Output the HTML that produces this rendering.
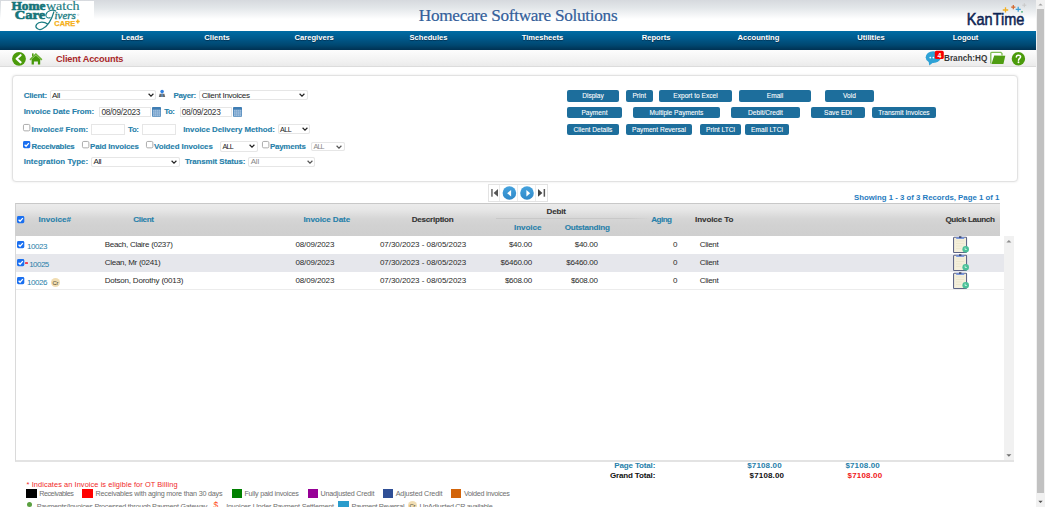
<!DOCTYPE html>
<html><head><meta charset="utf-8"><title>Client Accounts</title>
<style>
html,body{margin:0;padding:0;}
body{width:1045px;height:507px;overflow:hidden;position:relative;background:#fff;font-family:"Liberation Sans",sans-serif;}
.t{position:absolute;white-space:nowrap;line-height:1;}
.r{position:absolute;}
svg.r{overflow:visible;}
</style></head><body>
<div class="r" style="left:0px;top:0px;width:1036px;height:31px;background:linear-gradient(#d6d9de 0px,#e3e7ea 8px,#f7f8f9 16px,#fff 19px,#fff 31px);"></div>
<div class="r" style="left:1px;top:1px;width:93px;height:28px;background:#fff;"></div>
<svg class="r" style="left:0;top:0" width="100" height="31" viewBox="0 0 100 31">
<text x="11.5" y="9.7" font-family="Liberation Serif" font-weight="700" font-size="12" fill="#167479" textLength="34" lengthAdjust="spacingAndGlyphs" stroke="#167479" stroke-width="0.6">Home</text>
<text x="46" y="9.7" font-family="Liberation Serif" font-size="12" fill="#1b7d83" textLength="33.4" lengthAdjust="spacingAndGlyphs" stroke="#1b7d83" stroke-width="0.15">watch</text>
<text x="14.8" y="18.7" font-family="Liberation Serif" font-weight="700" font-size="12" fill="#167479" textLength="30.5" lengthAdjust="spacingAndGlyphs" stroke="#167479" stroke-width="0.6">Care</text>
<text x="54.5" y="18.5" font-family="Liberation Serif" font-style="italic" font-size="9.5" fill="#1b7d83" textLength="21.3" lengthAdjust="spacingAndGlyphs" stroke="#1b7d83" stroke-width="0.3">ivers</text>
<circle cx="78.2" cy="14.8" r="0.8" fill="none" stroke="#8ab" stroke-width="0.3"/>
<path d="M56.2 11.3 C53 9 47.2 10.4 46 14.5 C45.4 17 47.5 18.8 50.5 17.5" stroke="#1b7d83" stroke-width="1.1" fill="none"/>
<path d="M54 11.5 C52 18.5 48 26 42.5 28.8 C38.5 31 34.3 27.5 36.6 24.3 C38.8 21.3 44.5 21.5 47.6 24" stroke="#1b7d83" stroke-width="1.2" fill="none"/>
<text x="54.3" y="25.9" font-family="Liberation Sans" font-weight="700" font-size="7.6" fill="#f5b01a" textLength="21" lengthAdjust="spacingAndGlyphs" stroke="#f5b01a" stroke-width="0.25">CARE</text>
<path d="M77.8 19.6 V23.4 M75.9 21.5 H79.7" stroke="#f5b01a" stroke-width="1.4"/>
</svg>
<div class="t" style="left:418.80px;top:7px;font-size:17.2px;color:#345f9b;font-weight:400;font-family:'Liberation Serif', serif;letter-spacing:-0.285px;-webkit-text-stroke:0.22px #345f9b;">Homecare Software Solutions</div>
<svg class="r" style="left:950px;top:0" width="86" height="31" viewBox="950 0 86 31">
<text x="966.8" y="24.9" font-family="Liberation Sans" font-size="17" fill="#0f2553" stroke="#0f2553" stroke-width="0.55" textLength="57.6" lengthAdjust="spacingAndGlyphs">KanTime</text>
<path d="M1005.5 7.3v5.3M1002.8 10h5.4" stroke="#f3b020" stroke-width="1.3"/>
<path d="M1013.3 5v4.2M1011.2 7.1h4.2" stroke="#d2652a" stroke-width="1.2"/>
<path d="M1018.2 6.8v5M1015.7 9.3h5" stroke="#3a9ed8" stroke-width="1.2"/>
<path d="M1024.3 3.2v4M1022.3 5.2h4" stroke="#c8c8c8" stroke-width="1"/>
<circle cx="1022" cy="11.8" r="0.9" fill="#40b070"/>
</svg>
<div class="r" style="left:0px;top:31px;width:1036px;height:19px;background:linear-gradient(#006ca5,#00598b 40%,#004770 75%,#003253);"></div>
<div class="t" style="left:121.32px;top:34px;font-size:7.6px;color:#fff;font-weight:700;font-family:'Liberation Sans', sans-serif;text-shadow:0 0.8px 0.8px rgba(0,20,40,0.55);">Leads</div>
<div class="t" style="left:204.33px;top:34px;font-size:7.6px;color:#fff;font-weight:700;font-family:'Liberation Sans', sans-serif;text-shadow:0 0.8px 0.8px rgba(0,20,40,0.55);">Clients</div>
<div class="t" style="left:294.55px;top:34px;font-size:7.6px;color:#fff;font-weight:700;font-family:'Liberation Sans', sans-serif;text-shadow:0 0.8px 0.8px rgba(0,20,40,0.55);">Caregivers</div>
<div class="t" style="left:409.50px;top:34px;font-size:7.6px;color:#fff;font-weight:700;font-family:'Liberation Sans', sans-serif;text-shadow:0 0.8px 0.8px rgba(0,20,40,0.55);">Schedules</div>
<div class="t" style="left:521.66px;top:34px;font-size:7.6px;color:#fff;font-weight:700;font-family:'Liberation Sans', sans-serif;text-shadow:0 0.8px 0.8px rgba(0,20,40,0.55);">Timesheets</div>
<div class="t" style="left:641.74px;top:34px;font-size:7.6px;color:#fff;font-weight:700;font-family:'Liberation Sans', sans-serif;text-shadow:0 0.8px 0.8px rgba(0,20,40,0.55);">Reports</div>
<div class="t" style="left:737.60px;top:34px;font-size:7.6px;color:#fff;font-weight:700;font-family:'Liberation Sans', sans-serif;text-shadow:0 0.8px 0.8px rgba(0,20,40,0.55);">Accounting</div>
<div class="t" style="left:857.28px;top:34px;font-size:7.6px;color:#fff;font-weight:700;font-family:'Liberation Sans', sans-serif;text-shadow:0 0.8px 0.8px rgba(0,20,40,0.55);">Utilities</div>
<div class="t" style="left:952.64px;top:34px;font-size:7.6px;color:#fff;font-weight:700;font-family:'Liberation Sans', sans-serif;text-shadow:0 0.8px 0.8px rgba(0,20,40,0.55);">Logout</div>
<div class="r" style="left:0px;top:50px;width:1036px;height:17px;background:linear-gradient(#fdfdfd,#f3f3f3 60%,#ebebeb);border-bottom:1px solid #dcdcdc;box-sizing:border-box;"></div>
<svg class="r" style="left:0;top:48px" width="60" height="20" viewBox="0 48 60 20">
<circle cx="19" cy="58.8" r="6.9" fill="#4b9b0b"/>
<path d="M20.6 55.2 L16.6 58.8 L20.6 62.4" stroke="#fff" stroke-width="2.1" fill="none" stroke-linecap="round" stroke-linejoin="round"/>
<rect x="32" y="53.4" width="1.6" height="3" fill="#4e9d12"/>
<path d="M31.6 59.2 L35.9 55.6 L40.2 59.2 V64.6 H37.9 V61.6 H33.9 V64.6 H31.6 Z" fill="#46990a"/>
<path d="M29.4 59.2 L35.9 53 L42.4 59.2 L41.2 60.4 L35.9 55.3 L30.6 60.4 Z" fill="#6ab232"/>
</svg>
<div class="t" style="left:56.10px;top:55px;font-size:9.2px;color:#a8282a;font-weight:700;font-family:'Liberation Sans', sans-serif;letter-spacing:-0.164px;">Client Accounts</div>
<svg class="r" style="left:920px;top:48px" width="110" height="20" viewBox="920 48 110 20">
<ellipse cx="933.2" cy="57.2" rx="7.5" ry="5.9" fill="#2ea2d6"/>
<path d="M928.5 61 L929.3 65.6 L933.5 62.2 Z" fill="#2ea2d6"/>
<circle cx="930.3" cy="57.6" r="0.9" fill="#fff"/><circle cx="933.4" cy="57.6" r="0.9" fill="#fff"/>
<rect x="934.8" y="50.8" width="9" height="8.3" rx="1.6" fill="#f80000"/>
<text x="939.3" y="57.6" font-family="Liberation Sans" font-weight="700" font-size="6.8" fill="#fff" text-anchor="middle">4</text>
<path d="M990.8 63.5 V53.3 Q990.8 52.4 991.7 52.4 H1000.8 L1002 53.6 V55.5" stroke="#7fbe52" stroke-width="1.3" fill="#fff"/>
<path d="M994.2 55.4 L1005.3 55.8 L1003.4 63.9 L991.5 63.9 Z" fill="#4f9d12"/>
<circle cx="1018.4" cy="58.7" r="6.7" fill="#4b9b0b"/>
<path d="M1016.3 56.9 C1016.3 54.6 1020.6 54.6 1020.6 56.8 C1020.6 58.3 1018.5 58.5 1018.5 60.3" stroke="#fff" stroke-width="1.5" fill="none" stroke-linecap="round"/><circle cx="1018.5" cy="62.2" r="0.95" fill="#fff"/>
</svg>
<div class="t" style="left:944.00px;top:55px;font-size:8.2px;color:#383838;font-weight:700;font-family:'Liberation Sans', sans-serif;letter-spacing:0.013px;">Branch:HQ</div>
<div class="r" style="left:12px;top:75px;width:1006px;height:107px;border:1px solid #e2e2e2;border-radius:4px;box-sizing:border-box;background:#fff;box-shadow:0 0 2.5px rgba(0,0,0,0.10);"></div>
<div class="t" style="left:23.70px;top:92px;font-size:7.9px;color:#2680aa;font-weight:700;font-family:'Liberation Sans', sans-serif;letter-spacing:-0.178px;-webkit-text-stroke:0.12px #2680aa;">Client:</div>
<div class="t" style="left:173.40px;top:92px;font-size:7.9px;color:#2680aa;font-weight:700;font-family:'Liberation Sans', sans-serif;letter-spacing:-0.255px;-webkit-text-stroke:0.12px #2680aa;">Payer:</div>
<div class="t" style="left:23.70px;top:108px;font-size:7.9px;color:#2680aa;font-weight:700;font-family:'Liberation Sans', sans-serif;letter-spacing:-0.029px;-webkit-text-stroke:0.12px #2680aa;">Invoice Date From:</div>
<div class="t" style="left:164.30px;top:108px;font-size:7.9px;color:#2680aa;font-weight:700;font-family:'Liberation Sans', sans-serif;letter-spacing:-0.546px;-webkit-text-stroke:0.12px #2680aa;">To:</div>
<div class="t" style="left:31.50px;top:126px;font-size:7.9px;color:#2680aa;font-weight:700;font-family:'Liberation Sans', sans-serif;letter-spacing:0.038px;-webkit-text-stroke:0.12px #2680aa;">Invoice# From:</div>
<div class="t" style="left:128.00px;top:126px;font-size:7.9px;color:#2680aa;font-weight:700;font-family:'Liberation Sans', sans-serif;letter-spacing:-0.346px;-webkit-text-stroke:0.12px #2680aa;">To:</div>
<div class="t" style="left:183.20px;top:126px;font-size:7.9px;color:#2680aa;font-weight:700;font-family:'Liberation Sans', sans-serif;letter-spacing:-0.059px;-webkit-text-stroke:0.12px #2680aa;">Invoice Delivery Method:</div>
<div class="t" style="left:31.50px;top:143px;font-size:7.9px;color:#2680aa;font-weight:700;font-family:'Liberation Sans', sans-serif;letter-spacing:-0.246px;-webkit-text-stroke:0.12px #2680aa;">Receivables</div>
<div class="t" style="left:90.00px;top:143px;font-size:7.9px;color:#2680aa;font-weight:700;font-family:'Liberation Sans', sans-serif;letter-spacing:-0.123px;-webkit-text-stroke:0.12px #2680aa;">Paid Invoices</div>
<div class="t" style="left:154.00px;top:143px;font-size:7.9px;color:#2680aa;font-weight:700;font-family:'Liberation Sans', sans-serif;letter-spacing:-0.048px;-webkit-text-stroke:0.12px #2680aa;">Voided Invoices</div>
<div class="t" style="left:269.90px;top:143px;font-size:7.9px;color:#2680aa;font-weight:700;font-family:'Liberation Sans', sans-serif;letter-spacing:-0.190px;-webkit-text-stroke:0.12px #2680aa;">Payments</div>
<div class="t" style="left:23.70px;top:158px;font-size:7.9px;color:#2680aa;font-weight:700;font-family:'Liberation Sans', sans-serif;letter-spacing:0.064px;-webkit-text-stroke:0.12px #2680aa;">Integration Type:</div>
<div class="t" style="left:185.00px;top:158px;font-size:7.9px;color:#2680aa;font-weight:700;font-family:'Liberation Sans', sans-serif;letter-spacing:-0.093px;-webkit-text-stroke:0.12px #2680aa;">Transmit Status:</div>
<div class="r" style="left:49.5px;top:90px;width:106.5px;height:10.299999999999997px;border:1px solid #e6e6e6;border-radius:2px;box-sizing:border-box;background:#fff;box-shadow:0 0 0.6px rgba(0,0,0,0.07);"></div>
<div class="t" style="left:51.90px;top:92px;font-size:8.1px;color:#222;font-weight:400;font-family:'Liberation Sans', sans-serif;letter-spacing:-0.345px;">All</div>
<svg class="r" style="left:147.5px;top:93.15px" width="6" height="4" viewBox="0 0 6 4"><path d="M0.6 0.8 L3 3.1 L5.4 0.8" stroke="#222" stroke-width="1.2" fill="none"/></svg>
<svg class="r" style="left:158px;top:89px" width="8" height="9" viewBox="158 89 8 9">
<path d="M158.8 97 L159.6 93.8 H164.4 L165.2 97 Z" fill="#6b6b6b"/>
<rect x="161.5" y="93.8" width="1.1" height="3.2" fill="#5a9ee0"/>
<circle cx="162.1" cy="91.6" r="1.8" fill="#2f7fe0"/>
</svg>
<div class="r" style="left:199.4px;top:90px;width:108.29999999999998px;height:10.299999999999997px;border:1px solid #e6e6e6;border-radius:2px;box-sizing:border-box;background:#fff;box-shadow:0 0 0.6px rgba(0,0,0,0.07);"></div>
<div class="t" style="left:201.80px;top:92px;font-size:8.1px;color:#222;font-weight:400;font-family:'Liberation Sans', sans-serif;letter-spacing:-0.321px;">Client Invoices</div>
<svg class="r" style="left:299.2px;top:93.15px" width="6" height="4" viewBox="0 0 6 4"><path d="M0.6 0.8 L3 3.1 L5.4 0.8" stroke="#222" stroke-width="1.2" fill="none"/></svg>
<div class="r" style="left:99.2px;top:106.7px;width:51.8px;height:10.700000000000003px;border:1px solid #e6e6e6;box-sizing:border-box;background:#fff;box-shadow:0 0 0.6px rgba(0,0,0,0.07);"></div>
<div class="t" style="left:101.40px;top:108px;font-size:8.3px;color:#333;font-weight:400;font-family:'Liberation Sans', sans-serif;letter-spacing:-0.271px;">08/09/2023</div>
<svg class="r" style="left:152px;top:107px" width="9" height="10" viewBox="0 0 9 10">
<rect x="0" y="0" width="9" height="9.7" rx="0.8" fill="#3f7db3"/>
<rect x="0.6" y="2.5" width="7.8" height="6.7" fill="#6f9cc8"/>
<rect x="0.90" y="2.90" width="1.55" height="1.8" fill="#9dbedd"/><rect x="0.90" y="5.10" width="1.55" height="1.8" fill="#9dbedd"/><rect x="0.90" y="7.30" width="1.55" height="1.8" fill="#9dbedd"/><rect x="2.85" y="2.90" width="1.55" height="1.8" fill="#9dbedd"/><rect x="2.85" y="5.10" width="1.55" height="1.8" fill="#9dbedd"/><rect x="2.85" y="7.30" width="1.55" height="1.8" fill="#9dbedd"/><rect x="4.80" y="2.90" width="1.55" height="1.8" fill="#9dbedd"/><rect x="4.80" y="5.10" width="1.55" height="1.8" fill="#9dbedd"/><rect x="4.80" y="7.30" width="1.55" height="1.8" fill="#9dbedd"/><rect x="6.75" y="2.90" width="1.55" height="1.8" fill="#9dbedd"/><rect x="6.75" y="5.10" width="1.55" height="1.8" fill="#9dbedd"/><rect x="6.75" y="7.30" width="1.55" height="1.8" fill="#9dbedd"/>
</svg>
<div class="r" style="left:179.5px;top:106.5px;width:52.099999999999994px;height:10.900000000000006px;border:1px solid #e6e6e6;box-sizing:border-box;background:#fff;box-shadow:0 0 0.6px rgba(0,0,0,0.07);"></div>
<div class="t" style="left:181.70px;top:108px;font-size:8.3px;color:#333;font-weight:400;font-family:'Liberation Sans', sans-serif;letter-spacing:-0.271px;">08/09/2023</div>
<svg class="r" style="left:233px;top:107px" width="9" height="10" viewBox="0 0 9 10">
<rect x="0" y="0" width="9" height="9.7" rx="0.8" fill="#3f7db3"/>
<rect x="0.6" y="2.5" width="7.8" height="6.7" fill="#6f9cc8"/>
<rect x="0.90" y="2.90" width="1.55" height="1.8" fill="#9dbedd"/><rect x="0.90" y="5.10" width="1.55" height="1.8" fill="#9dbedd"/><rect x="0.90" y="7.30" width="1.55" height="1.8" fill="#9dbedd"/><rect x="2.85" y="2.90" width="1.55" height="1.8" fill="#9dbedd"/><rect x="2.85" y="5.10" width="1.55" height="1.8" fill="#9dbedd"/><rect x="2.85" y="7.30" width="1.55" height="1.8" fill="#9dbedd"/><rect x="4.80" y="2.90" width="1.55" height="1.8" fill="#9dbedd"/><rect x="4.80" y="5.10" width="1.55" height="1.8" fill="#9dbedd"/><rect x="4.80" y="7.30" width="1.55" height="1.8" fill="#9dbedd"/><rect x="6.75" y="2.90" width="1.55" height="1.8" fill="#9dbedd"/><rect x="6.75" y="5.10" width="1.55" height="1.8" fill="#9dbedd"/><rect x="6.75" y="7.30" width="1.55" height="1.8" fill="#9dbedd"/>
</svg>
<svg class="r" style="left:23.4px;top:124.3px" width="7.3" height="7.3" viewBox="0 0 10 10">
<rect x="0.6" y="0.6" width="8.8" height="8.8" rx="1.8" fill="#fff" stroke="#9c9c9c" stroke-width="1.15"/></svg>
<div class="r" style="left:91.1px;top:123.7px;width:33.7px;height:10.899999999999991px;border:1px solid #e6e6e6;box-sizing:border-box;background:#fff;box-shadow:0 0 0.6px rgba(0,0,0,0.07);"></div>
<div class="r" style="left:141.5px;top:123.7px;width:34.5px;height:10.899999999999991px;border:1px solid #e6e6e6;box-sizing:border-box;background:#fff;box-shadow:0 0 0.6px rgba(0,0,0,0.07);"></div>
<div class="r" style="left:277.5px;top:124.2px;width:32.5px;height:10.299999999999997px;border:1px solid #e6e6e6;border-radius:2px;box-sizing:border-box;background:#fff;box-shadow:0 0 0.6px rgba(0,0,0,0.07);"></div>
<div class="t" style="left:279.90px;top:126px;font-size:7.2px;color:#222;font-weight:400;font-family:'Liberation Sans', sans-serif;letter-spacing:-0.508px;">ALL</div>
<svg class="r" style="left:301.5px;top:127.35px" width="6" height="4" viewBox="0 0 6 4"><path d="M0.6 0.8 L3 3.1 L5.4 0.8" stroke="#222" stroke-width="1.2" fill="none"/></svg>
<svg class="r" style="left:23.4px;top:141.3px" width="7.3" height="7.3" viewBox="0 0 10 10">
<rect x="0" y="0" width="10" height="10" rx="2" fill="#1a6ff0"/>
<path d="M2.2 5.2 L4.2 7.2 L8 2.8" stroke="#fff" stroke-width="1.7" fill="none"/></svg>
<svg class="r" style="left:81.8px;top:141.3px" width="7.3" height="7.3" viewBox="0 0 10 10">
<rect x="0.6" y="0.6" width="8.8" height="8.8" rx="1.8" fill="#fff" stroke="#9c9c9c" stroke-width="1.15"/></svg>
<svg class="r" style="left:146.4px;top:141.3px" width="7.3" height="7.3" viewBox="0 0 10 10">
<rect x="0.6" y="0.6" width="8.8" height="8.8" rx="1.8" fill="#fff" stroke="#9c9c9c" stroke-width="1.15"/></svg>
<div class="r" style="left:220px;top:141.3px;width:37.60000000000002px;height:10.299999999999983px;border:1px solid #e6e6e6;border-radius:2px;box-sizing:border-box;background:#fff;box-shadow:0 0 0.6px rgba(0,0,0,0.07);"></div>
<div class="t" style="left:222.40px;top:143px;font-size:7.2px;color:#222;font-weight:400;font-family:'Liberation Sans', sans-serif;letter-spacing:-0.758px;">ALL</div>
<svg class="r" style="left:249.10000000000002px;top:144.45px" width="6" height="4" viewBox="0 0 6 4"><path d="M0.6 0.8 L3 3.1 L5.4 0.8" stroke="#222" stroke-width="1.2" fill="none"/></svg>
<svg class="r" style="left:262px;top:141.3px" width="7.3" height="7.3" viewBox="0 0 10 10">
<rect x="0.6" y="0.6" width="8.8" height="8.8" rx="1.8" fill="#fff" stroke="#9c9c9c" stroke-width="1.15"/></svg>
<div class="r" style="left:311px;top:141.7px;width:33.60000000000002px;height:9.700000000000017px;border:1px solid #e6e6e6;border-radius:2px;box-sizing:border-box;background:#fff;box-shadow:0 0 0.6px rgba(0,0,0,0.07);"></div>
<div class="t" style="left:313.40px;top:143px;font-size:7.2px;color:#888;font-weight:400;font-family:'Liberation Sans', sans-serif;letter-spacing:-0.808px;">ALL</div>
<svg class="r" style="left:336.1px;top:144.55px" width="6" height="4" viewBox="0 0 6 4"><path d="M0.6 0.8 L3 3.1 L5.4 0.8" stroke="#555" stroke-width="1.2" fill="none"/></svg>
<div class="r" style="left:91.1px;top:157.2px;width:88.80000000000001px;height:9.400000000000006px;border:1px solid #e6e6e6;border-radius:2px;box-sizing:border-box;background:#fff;box-shadow:0 0 0.6px rgba(0,0,0,0.07);"></div>
<div class="t" style="left:93.50px;top:158px;font-size:8.1px;color:#222;font-weight:400;font-family:'Liberation Sans', sans-serif;letter-spacing:-0.495px;">All</div>
<svg class="r" style="left:171.4px;top:159.89999999999998px" width="6" height="4" viewBox="0 0 6 4"><path d="M0.6 0.8 L3 3.1 L5.4 0.8" stroke="#222" stroke-width="1.2" fill="none"/></svg>
<div class="r" style="left:248.3px;top:157px;width:66.69999999999999px;height:9.900000000000006px;border:1px solid #e6e6e6;border-radius:2px;box-sizing:border-box;background:#fff;box-shadow:0 0 0.6px rgba(0,0,0,0.07);"></div>
<div class="t" style="left:250.70px;top:158px;font-size:8.1px;color:#888;font-weight:400;font-family:'Liberation Sans', sans-serif;letter-spacing:-0.246px;">All</div>
<svg class="r" style="left:306.5px;top:159.95px" width="6" height="4" viewBox="0 0 6 4"><path d="M0.6 0.8 L3 3.1 L5.4 0.8" stroke="#555" stroke-width="1.2" fill="none"/></svg>
<div class="r" style="left:567px;top:90.3px;width:52px;height:11.299999999999997px;background:#1d6e9c;border-radius:2px;"></div>
<div class="t" style="left:582.18px;top:93px;font-size:6.6px;color:#fff;font-weight:400;font-family:'Liberation Sans', sans-serif;-webkit-text-stroke:0.08px #fff;">Display</div>
<div class="r" style="left:626px;top:90.3px;width:26.5px;height:11.299999999999997px;background:#1d6e9c;border-radius:2px;"></div>
<div class="t" style="left:632.47px;top:93px;font-size:6.6px;color:#fff;font-weight:400;font-family:'Liberation Sans', sans-serif;-webkit-text-stroke:0.08px #fff;">Print</div>
<div class="r" style="left:659px;top:90.3px;width:73px;height:11.299999999999997px;background:#1d6e9c;border-radius:2px;"></div>
<div class="t" style="left:673.31px;top:93px;font-size:6.6px;color:#fff;font-weight:400;font-family:'Liberation Sans', sans-serif;-webkit-text-stroke:0.08px #fff;">Export to Excel</div>
<div class="r" style="left:739px;top:90.3px;width:72px;height:11.299999999999997px;background:#1d6e9c;border-radius:2px;"></div>
<div class="t" style="left:766.75px;top:93px;font-size:6.6px;color:#fff;font-weight:400;font-family:'Liberation Sans', sans-serif;-webkit-text-stroke:0.08px #fff;">Email</div>
<div class="r" style="left:825px;top:90.3px;width:49px;height:11.299999999999997px;background:#1d6e9c;border-radius:2px;"></div>
<div class="t" style="left:843.08px;top:93px;font-size:6.6px;color:#fff;font-weight:400;font-family:'Liberation Sans', sans-serif;-webkit-text-stroke:0.08px #fff;">Void</div>
<div class="r" style="left:567px;top:107.2px;width:55px;height:10.700000000000003px;background:#1d6e9c;border-radius:2px;"></div>
<div class="t" style="left:581.48px;top:110px;font-size:6.6px;color:#fff;font-weight:400;font-family:'Liberation Sans', sans-serif;-webkit-text-stroke:0.08px #fff;">Payment</div>
<div class="r" style="left:633px;top:107.2px;width:87px;height:10.700000000000003px;background:#1d6e9c;border-radius:2px;"></div>
<div class="t" style="left:649.54px;top:110px;font-size:6.6px;color:#fff;font-weight:400;font-family:'Liberation Sans', sans-serif;-webkit-text-stroke:0.08px #fff;">Multiple Payments</div>
<div class="r" style="left:731px;top:107.2px;width:69px;height:10.700000000000003px;background:#1d6e9c;border-radius:2px;"></div>
<div class="t" style="left:748.08px;top:110px;font-size:6.6px;color:#fff;font-weight:400;font-family:'Liberation Sans', sans-serif;-webkit-text-stroke:0.08px #fff;">Debit/Credit</div>
<div class="r" style="left:811px;top:107.2px;width:54px;height:10.700000000000003px;background:#1d6e9c;border-radius:2px;"></div>
<div class="t" style="left:824.06px;top:110px;font-size:6.6px;color:#fff;font-weight:400;font-family:'Liberation Sans', sans-serif;-webkit-text-stroke:0.08px #fff;">Save EDI</div>
<div class="r" style="left:872px;top:107.2px;width:64px;height:10.700000000000003px;background:#1d6e9c;border-radius:2px;"></div>
<div class="t" style="left:878.26px;top:110px;font-size:6.6px;color:#fff;font-weight:400;font-family:'Liberation Sans', sans-serif;-webkit-text-stroke:0.08px #fff;">Transmit Invoices</div>
<div class="r" style="left:567px;top:124.2px;width:52px;height:10.799999999999997px;background:#1d6e9c;border-radius:2px;"></div>
<div class="t" style="left:573.56px;top:127px;font-size:6.6px;color:#fff;font-weight:400;font-family:'Liberation Sans', sans-serif;-webkit-text-stroke:0.08px #fff;">Client Details</div>
<div class="r" style="left:626px;top:124.2px;width:66px;height:10.799999999999997px;background:#1d6e9c;border-radius:2px;"></div>
<div class="t" style="left:632.04px;top:127px;font-size:6.6px;color:#fff;font-weight:400;font-family:'Liberation Sans', sans-serif;-webkit-text-stroke:0.08px #fff;">Payment Reversal</div>
<div class="r" style="left:700px;top:124.2px;width:41px;height:10.799999999999997px;background:#1d6e9c;border-radius:2px;"></div>
<div class="t" style="left:706.08px;top:127px;font-size:6.6px;color:#fff;font-weight:400;font-family:'Liberation Sans', sans-serif;-webkit-text-stroke:0.08px #fff;">Print LTCi</div>
<div class="r" style="left:745px;top:124.2px;width:44px;height:10.799999999999997px;background:#1d6e9c;border-radius:2px;"></div>
<div class="t" style="left:751.11px;top:127px;font-size:6.6px;color:#fff;font-weight:400;font-family:'Liberation Sans', sans-serif;-webkit-text-stroke:0.08px #fff;">Email LTCi</div>
<div class="r" style="left:488px;top:184px;width:60px;height:18px;border:1px solid #e3e3e3;box-sizing:border-box;background:#fff;"></div>
<div class="r" style="left:499px;top:185px;width:1px;height:16px;background:#ececec;"></div>
<div class="r" style="left:517px;top:185px;width:1px;height:16px;background:#ececec;"></div>
<div class="r" style="left:535px;top:185px;width:1px;height:16px;background:#ececec;"></div>
<svg class="r" style="left:488px;top:184px" width="60" height="18" viewBox="488 184 60 18">
<rect x="491.2" y="189" width="1.5" height="7.7" fill="#666"/>
<path d="M498 189 L493.6 192.9 L498 196.8 Z" fill="#555"/>
<defs><linearGradient id="pg" x1="0" y1="0" x2="0" y2="1"><stop offset="0" stop-color="#45a3de"/><stop offset="1" stop-color="#2f88c8"/></linearGradient></defs>
<circle cx="509.4" cy="193" r="6.8" fill="url(#pg)"/>
<path d="M511.1 190 L507.1 193.2 L511.1 196.4 Z" fill="#fff"/>
<circle cx="527" cy="193" r="6.8" fill="url(#pg)"/>
<path d="M526.4 190 L530.2 193.2 L526.4 196.4 Z" fill="#fff"/>
<path d="M538 189 L542.4 192.9 L538 196.8 Z" fill="#444"/>
<rect x="543.6" y="189" width="1.5" height="7.7" fill="#555"/>
</svg>
<div class="t" style="left:854.00px;top:194px;font-size:7.8px;color:#1f7bc0;font-weight:700;font-family:'Liberation Sans', sans-serif;letter-spacing:0.005px;">Showing 1 - 3 of 3 Records, Page 1 of 1</div>
<div class="r" style="left:15px;top:203px;width:985px;height:33px;background:linear-gradient(#ebebeb 0px,#e6e6e6 6px,#d5d5d5 15px,#d1d1d1 22px,#cfcfcf 33px);border-top:1px solid #c8c8c8;border-left:1px solid #d0d0d0;box-sizing:border-box;"></div>
<div class="r" style="left:496px;top:217.6px;width:154px;height:1.0px;background:linear-gradient(90deg,#c8c8c8 85%,rgba(200,200,200,0));"></div>
<svg class="r" style="left:16.7px;top:216px" width="7.3" height="7.3" viewBox="0 0 10 10">
<rect x="0" y="0" width="10" height="10" rx="2" fill="#1a6ff0"/>
<path d="M2.2 5.2 L4.2 7.2 L8 2.8" stroke="#fff" stroke-width="1.7" fill="none"/></svg>
<div class="t" style="left:38.60px;top:216px;font-size:8.1px;color:#2680aa;font-weight:700;font-family:'Liberation Sans', sans-serif;-webkit-text-stroke:0.1px currentColor;">Invoice#</div>
<div class="t" style="left:133.20px;top:216px;font-size:8.1px;color:#2680aa;font-weight:700;font-family:'Liberation Sans', sans-serif;letter-spacing:-0.324px;-webkit-text-stroke:0.1px currentColor;">Client</div>
<div class="t" style="left:303.40px;top:216px;font-size:8.1px;color:#2680aa;font-weight:700;font-family:'Liberation Sans', sans-serif;letter-spacing:-0.083px;-webkit-text-stroke:0.1px currentColor;">Invoice Date</div>
<div class="t" style="left:411.70px;top:216px;font-size:8.1px;color:#333;font-weight:700;font-family:'Liberation Sans', sans-serif;letter-spacing:-0.245px;-webkit-text-stroke:0.1px currentColor;">Description</div>
<div class="t" style="left:546.60px;top:208px;font-size:8.1px;color:#333;font-weight:700;font-family:'Liberation Sans', sans-serif;letter-spacing:-0.213px;-webkit-text-stroke:0.1px currentColor;">Debit</div>
<div class="t" style="left:514.00px;top:224px;font-size:8.1px;color:#2680aa;font-weight:700;font-family:'Liberation Sans', sans-serif;letter-spacing:-0.084px;-webkit-text-stroke:0.1px currentColor;">Invoice</div>
<div class="t" style="left:564.70px;top:224px;font-size:8.1px;color:#2680aa;font-weight:700;font-family:'Liberation Sans', sans-serif;letter-spacing:-0.251px;-webkit-text-stroke:0.1px currentColor;">Outstanding</div>
<div class="t" style="left:651.20px;top:216px;font-size:8.1px;color:#2680aa;font-weight:700;font-family:'Liberation Sans', sans-serif;letter-spacing:-0.516px;-webkit-text-stroke:0.1px currentColor;">Aging</div>
<div class="t" style="left:695.10px;top:216px;font-size:8.1px;color:#333;font-weight:700;font-family:'Liberation Sans', sans-serif;letter-spacing:-0.127px;-webkit-text-stroke:0.1px currentColor;">Invoice To</div>
<div class="t" style="left:945.40px;top:216px;font-size:8.1px;color:#333;font-weight:700;font-family:'Liberation Sans', sans-serif;letter-spacing:-0.367px;-webkit-text-stroke:0.1px currentColor;">Quick Launch</div>
<div class="r" style="left:15px;top:236px;width:999px;height:226px;background:#fff;border-left:1px solid #dadada;border-bottom:2px solid #e3e3e3;box-sizing:border-box;"></div>
<div class="r" style="left:1004px;top:236px;width:10px;height:224px;background:#f1f1f1;"></div>
<svg class="r" style="left:1004px;top:236px" width="10" height="224" viewBox="1004 236 10 224">
<path d="M1006.4 242.6 L1008.9 240.1 L1011.4 242.6 Z" fill="#8e8e8e"/>
<path d="M1006.4 454.3 L1008.9 456.8 L1011.4 454.3 Z" fill="#707070"/>
</svg>
<div class="r" style="left:16px;top:254px;width:988px;height:18px;background:#e6e7ec;"></div>
<div class="r" style="left:16px;top:289.4px;width:988px;height:1.0px;background:#ececec;"></div>
<svg class="r" style="left:16.7px;top:241.3px" width="7.3" height="7.3" viewBox="0 0 10 10">
<rect x="0" y="0" width="10" height="10" rx="2" fill="#1a6ff0"/>
<path d="M2.2 5.2 L4.2 7.2 L8 2.8" stroke="#fff" stroke-width="1.7" fill="none"/></svg>
<div class="t" style="left:27.10px;top:243px;font-size:8px;color:#2680aa;font-weight:400;font-family:'Liberation Sans', sans-serif;letter-spacing:-0.460px;">10023</div>
<div class="t" style="left:104.70px;top:241px;font-size:8px;color:#2a2a2a;font-weight:400;font-family:'Liberation Sans', sans-serif;letter-spacing:-0.272px;">Beach, Claire (0237)</div>
<div class="t" style="left:295.40px;top:241px;font-size:8px;color:#2a2a2a;font-weight:400;font-family:'Liberation Sans', sans-serif;letter-spacing:-0.116px;">08/09/2023</div>
<div class="t" style="left:379.90px;top:241px;font-size:8px;color:#2a2a2a;font-weight:400;font-family:'Liberation Sans', sans-serif;letter-spacing:-0.041px;">07/30/2023 - 08/05/2023</div>
<div class="t" style="left:508.90px;top:241px;font-size:8px;color:#2a2a2a;font-weight:400;font-family:'Liberation Sans', sans-serif;letter-spacing:-0.236px;">$40.00</div>
<div class="t" style="left:574.70px;top:241px;font-size:8px;color:#2a2a2a;font-weight:400;font-family:'Liberation Sans', sans-serif;letter-spacing:-0.256px;">$40.00</div>
<div class="t" style="left:672.90px;top:241px;font-size:8px;color:#2a2a2a;font-weight:400;font-family:'Liberation Sans', sans-serif;">0</div>
<div class="t" style="left:699.80px;top:241px;font-size:8px;color:#2a2a2a;font-weight:400;font-family:'Liberation Sans', sans-serif;letter-spacing:-0.328px;">Client</div>
<svg class="r" style="left:953px;top:236.2px" width="17" height="17" viewBox="0 0 17 17">
<rect x="0.55" y="1.3" width="13" height="15.2" rx="0.7" fill="#f4efdb" stroke="#5d6486" stroke-width="1.05"/>
<path d="M3 5H11M3 7.5H11M3 10H9M3 12.5H8" stroke="#e6dfc6" stroke-width="0.6"/>
<rect x="3.2" y="1.2" width="8" height="1.7" fill="#6f8fdc"/>
<rect x="6" y="0.3" width="2.4" height="1.5" fill="#3a4060"/>
<circle cx="12.7" cy="13.3" r="3.3" fill="#4cc199"/>
<path d="M12.1 11.6 V13.5 H13.8" stroke="#e8fff4" stroke-width="0.7" fill="none"/>
</svg>
<svg class="r" style="left:16.7px;top:259.3px" width="7.3" height="7.3" viewBox="0 0 10 10">
<rect x="0" y="0" width="10" height="10" rx="2" fill="#1a6ff0"/>
<path d="M2.2 5.2 L4.2 7.2 L8 2.8" stroke="#fff" stroke-width="1.7" fill="none"/></svg>
<div class="r" style="left:25.2px;top:261.9px;width:2.6000000000000014px;height:1.8000000000000114px;background:#f24455;border-radius:0.6px;"></div>
<div class="t" style="left:29.20px;top:261px;font-size:8px;color:#2680aa;font-weight:400;font-family:'Liberation Sans', sans-serif;letter-spacing:-0.535px;">10025</div>
<div class="t" style="left:104.70px;top:259px;font-size:8px;color:#2a2a2a;font-weight:400;font-family:'Liberation Sans', sans-serif;letter-spacing:-0.269px;">Clean, Mr (0241)</div>
<div class="t" style="left:295.40px;top:259px;font-size:8px;color:#2a2a2a;font-weight:400;font-family:'Liberation Sans', sans-serif;letter-spacing:-0.116px;">08/09/2023</div>
<div class="t" style="left:379.90px;top:259px;font-size:8px;color:#2a2a2a;font-weight:400;font-family:'Liberation Sans', sans-serif;letter-spacing:-0.041px;">07/30/2023 - 08/05/2023</div>
<div class="t" style="left:500.60px;top:259px;font-size:8px;color:#2a2a2a;font-weight:400;font-family:'Liberation Sans', sans-serif;letter-spacing:-0.251px;">$6460.00</div>
<div class="t" style="left:566.30px;top:259px;font-size:8px;color:#2a2a2a;font-weight:400;font-family:'Liberation Sans', sans-serif;letter-spacing:-0.251px;">$6460.00</div>
<div class="t" style="left:672.90px;top:259px;font-size:8px;color:#2a2a2a;font-weight:400;font-family:'Liberation Sans', sans-serif;">0</div>
<div class="t" style="left:699.80px;top:259px;font-size:8px;color:#2a2a2a;font-weight:400;font-family:'Liberation Sans', sans-serif;letter-spacing:-0.328px;">Client</div>
<svg class="r" style="left:953px;top:254.2px" width="17" height="17" viewBox="0 0 17 17">
<rect x="0.55" y="1.3" width="13" height="15.2" rx="0.7" fill="#f4efdb" stroke="#5d6486" stroke-width="1.05"/>
<path d="M3 5H11M3 7.5H11M3 10H9M3 12.5H8" stroke="#e6dfc6" stroke-width="0.6"/>
<rect x="3.2" y="1.2" width="8" height="1.7" fill="#6f8fdc"/>
<rect x="6" y="0.3" width="2.4" height="1.5" fill="#3a4060"/>
<circle cx="12.7" cy="13.3" r="3.3" fill="#4cc199"/>
<path d="M12.1 11.6 V13.5 H13.8" stroke="#e8fff4" stroke-width="0.7" fill="none"/>
</svg>
<svg class="r" style="left:16.7px;top:277.3px" width="7.3" height="7.3" viewBox="0 0 10 10">
<rect x="0" y="0" width="10" height="10" rx="2" fill="#1a6ff0"/>
<path d="M2.2 5.2 L4.2 7.2 L8 2.8" stroke="#fff" stroke-width="1.7" fill="none"/></svg>
<div class="t" style="left:27.10px;top:279px;font-size:8px;color:#2680aa;font-weight:400;font-family:'Liberation Sans', sans-serif;letter-spacing:-0.460px;">10026</div>
<div class="r" style="left:51px;top:278.2px;width:9px;height:9px;border-radius:50%;background:#f1ddb2;"></div>
<div class="t" style="left:52.60px;top:281px;font-size:5.8px;color:#4a3f2c;font-weight:400;font-family:'Liberation Sans', sans-serif;letter-spacing:-0.319px;">Cr</div>
<div class="t" style="left:104.70px;top:277px;font-size:8px;color:#2a2a2a;font-weight:400;font-family:'Liberation Sans', sans-serif;letter-spacing:-0.208px;">Dotson, Dorothy (0013)</div>
<div class="t" style="left:295.40px;top:277px;font-size:8px;color:#2a2a2a;font-weight:400;font-family:'Liberation Sans', sans-serif;letter-spacing:-0.116px;">08/09/2023</div>
<div class="t" style="left:379.90px;top:277px;font-size:8px;color:#2a2a2a;font-weight:400;font-family:'Liberation Sans', sans-serif;letter-spacing:-0.041px;">07/30/2023 - 08/05/2023</div>
<div class="t" style="left:504.90px;top:277px;font-size:8px;color:#2a2a2a;font-weight:400;font-family:'Liberation Sans', sans-serif;letter-spacing:-0.270px;">$608.00</div>
<div class="t" style="left:570.90px;top:277px;font-size:8px;color:#2a2a2a;font-weight:400;font-family:'Liberation Sans', sans-serif;letter-spacing:-0.320px;">$608.00</div>
<div class="t" style="left:672.90px;top:277px;font-size:8px;color:#2a2a2a;font-weight:400;font-family:'Liberation Sans', sans-serif;">0</div>
<div class="t" style="left:699.80px;top:277px;font-size:8px;color:#2a2a2a;font-weight:400;font-family:'Liberation Sans', sans-serif;letter-spacing:-0.328px;">Client</div>
<svg class="r" style="left:953px;top:272.2px" width="17" height="17" viewBox="0 0 17 17">
<rect x="0.55" y="1.3" width="13" height="15.2" rx="0.7" fill="#f4efdb" stroke="#5d6486" stroke-width="1.05"/>
<path d="M3 5H11M3 7.5H11M3 10H9M3 12.5H8" stroke="#e6dfc6" stroke-width="0.6"/>
<rect x="3.2" y="1.2" width="8" height="1.7" fill="#6f8fdc"/>
<rect x="6" y="0.3" width="2.4" height="1.5" fill="#3a4060"/>
<circle cx="12.7" cy="13.3" r="3.3" fill="#4cc199"/>
<path d="M12.1 11.6 V13.5 H13.8" stroke="#e8fff4" stroke-width="0.7" fill="none"/>
</svg>
<div class="t" style="left:614.30px;top:462px;font-size:8px;color:#2680aa;font-weight:700;font-family:'Liberation Sans', sans-serif;letter-spacing:-0.152px;">Page Total:</div>
<div class="t" style="left:747.20px;top:462px;font-size:8px;color:#2680aa;font-weight:700;font-family:'Liberation Sans', sans-serif;letter-spacing:0.149px;">$7108.00</div>
<div class="t" style="left:845.40px;top:462px;font-size:8px;color:#2680aa;font-weight:700;font-family:'Liberation Sans', sans-serif;letter-spacing:0.149px;">$7108.00</div>
<div class="t" style="left:609.90px;top:472px;font-size:8px;color:#111;font-weight:700;font-family:'Liberation Sans', sans-serif;letter-spacing:-0.142px;">Grand Total:</div>
<div class="t" style="left:749.60px;top:472px;font-size:8px;color:#111;font-weight:700;font-family:'Liberation Sans', sans-serif;letter-spacing:0.149px;">$7108.00</div>
<div class="t" style="left:847.50px;top:472px;font-size:8px;color:#f01818;font-weight:700;font-family:'Liberation Sans', sans-serif;letter-spacing:0.191px;">$7108.00</div>
<div class="t" style="left:26.60px;top:481px;font-size:7.4px;color:#f02828;font-weight:400;font-family:'Liberation Sans', sans-serif;letter-spacing:0.075px;">* Indicates an Invoice is eligible for OT Billing</div>
<div class="r" style="left:26px;top:488.7px;width:10.700000000000003px;height:9.0px;background:#000;"></div>
<div class="r" style="left:82.4px;top:488.7px;width:10.5px;height:9.0px;background:#f00;"></div>
<div class="r" style="left:231.5px;top:488.7px;width:10.300000000000011px;height:9.0px;background:#008000;"></div>
<div class="r" style="left:307.6px;top:488.7px;width:10.599999999999966px;height:9.0px;background:#960096;"></div>
<div class="r" style="left:383px;top:488.7px;width:10.399999999999977px;height:9.0px;background:#2f4f96;"></div>
<div class="r" style="left:450.8px;top:488.7px;width:10.399999999999977px;height:9.0px;background:#d2640a;"></div>
<div class="t" style="left:39.20px;top:490px;font-size:7.2px;color:#6e6e6e;font-weight:400;font-family:'Liberation Sans', sans-serif;letter-spacing:-0.450px;">Receivables</div>
<div class="t" style="left:95.60px;top:490px;font-size:7.2px;color:#6e6e6e;font-weight:400;font-family:'Liberation Sans', sans-serif;letter-spacing:-0.207px;">Receivables with aging more than 30 days</div>
<div class="t" style="left:244.40px;top:490px;font-size:7.2px;color:#6e6e6e;font-weight:400;font-family:'Liberation Sans', sans-serif;letter-spacing:-0.235px;">Fully paid invoices</div>
<div class="t" style="left:320.50px;top:490px;font-size:7.2px;color:#6e6e6e;font-weight:400;font-family:'Liberation Sans', sans-serif;letter-spacing:-0.227px;">Unadjusted Credit</div>
<div class="t" style="left:395.70px;top:490px;font-size:7.2px;color:#6e6e6e;font-weight:400;font-family:'Liberation Sans', sans-serif;letter-spacing:-0.172px;">Adjusted Credit</div>
<div class="t" style="left:464.00px;top:490px;font-size:7.2px;color:#6e6e6e;font-weight:400;font-family:'Liberation Sans', sans-serif;letter-spacing:-0.289px;">Voided invoices</div>
<div class="t" style="left:36.70px;top:503px;font-size:7.2px;color:#6e6e6e;font-weight:400;font-family:'Liberation Sans', sans-serif;letter-spacing:-0.256px;">Payments/Invoices Processed through Payment Gateway</div>
<div class="t" style="left:226.30px;top:503px;font-size:7.2px;color:#6e6e6e;font-weight:400;font-family:'Liberation Sans', sans-serif;letter-spacing:-0.215px;">Invoices Under Payment Settlement</div>
<div class="r" style="left:338.3px;top:501px;width:10.300000000000011px;height:9px;background:#2a9ccc;"></div>
<div class="t" style="left:351.50px;top:503px;font-size:7.2px;color:#6e6e6e;font-weight:400;font-family:'Liberation Sans', sans-serif;letter-spacing:-0.382px;">Payment Reversal</div>
<div class="r" style="left:408px;top:501px;width:9px;height:9px;border-radius:50%;background:#f1ddb2;"></div>
<div class="t" style="left:409.60px;top:504px;font-size:5.8px;color:#4a3f2c;font-weight:400;font-family:'Liberation Sans', sans-serif;letter-spacing:-0.319px;">Cr</div>
<div class="t" style="left:419.50px;top:503px;font-size:7.2px;color:#6e6e6e;font-weight:400;font-family:'Liberation Sans', sans-serif;letter-spacing:-0.307px;">UnAdjusted CR available</div>
<div class="r" style="left:27px;top:502px;width:5px;height:5px;border-radius:50%;background:#5aa040;"></div>
<div class="t" style="left:213.60px;top:501px;font-size:8.5px;color:#ff4a14;font-weight:400;font-family:'Liberation Sans', sans-serif;">$</div>
<div class="r" style="left:1036px;top:0px;width:9px;height:507px;background:#f1f1f1;"></div>
<div class="r" style="left:1037px;top:9px;width:7px;height:484px;background:#c1c1c1;"></div>
<svg class="r" style="left:1036px;top:0" width="9" height="507" viewBox="1036 0 9 507">
<path d="M1038.3 5.6 L1040.5 3.4 L1042.7 5.6 Z" fill="#a3a3a3"/>
<path d="M1038.3 500.8 L1040.5 503 L1042.7 500.8 Z" fill="#505050"/>
</svg>
</body></html>
